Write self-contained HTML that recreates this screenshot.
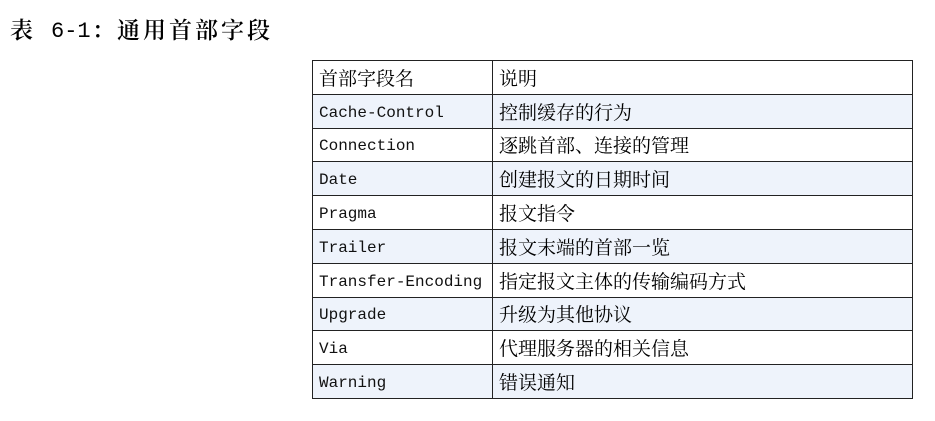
<!DOCTYPE html>
<html><head><meta charset="utf-8"><style>
html,body{margin:0;padding:0;background:#fff;width:935px;height:421px;overflow:hidden}
.t{position:absolute;top:15px;font:600 23px/1.2 "Noto Serif CJK SC","Liberation Serif",serif;color:#000;white-space:nowrap}
.tm{font:22px/1.2 "Liberation Mono",monospace;top:19px}
table{position:absolute;left:312px;top:60px;width:601px;border-collapse:collapse;table-layout:fixed}
td{border:1px solid #222;height:33.8px;padding:3px 0 0 6px;font:16px "Liberation Mono","Noto Serif CJK SC",monospace;color:#111;vertical-align:middle;white-space:nowrap;box-sizing:border-box;line-height:1}
td.c,tr.h td{font:19px "Noto Serif CJK SC","Liberation Serif",serif;color:#000;padding-top:0}
tr.b td{background:#eef3fb}
col.a{width:180px}
</style></head><body>
<span class="t" style="left:10px">表</span>
<span class="t tm" style="left:51px">6-1</span>
<span class="t" style="left:92px">：</span>
<span class="t" style="left:117px;letter-spacing:3px">通用首部字段</span>
<table><colgroup><col class="a"><col></colgroup>
<tr class="h"><td>首部字段名</td><td>说明</td></tr>
<tr class="b"><td>Cache-Control</td><td class="c">控制缓存的行为</td></tr>
<tr><td>Connection</td><td class="c">逐跳首部、连接的管理</td></tr>
<tr class="b"><td>Date</td><td class="c">创建报文的日期时间</td></tr>
<tr><td>Pragma</td><td class="c">报文指令</td></tr>
<tr class="b"><td>Trailer</td><td class="c">报文末端的首部一览</td></tr>
<tr><td>Transfer-Encoding</td><td class="c">指定报文主体的传输编码方式</td></tr>
<tr class="b"><td>Upgrade</td><td class="c">升级为其他协议</td></tr>
<tr><td>Via</td><td class="c">代理服务器的相关信息</td></tr>
<tr class="b"><td>Warning</td><td class="c">错误通知</td></tr>
</table>
</body></html>
